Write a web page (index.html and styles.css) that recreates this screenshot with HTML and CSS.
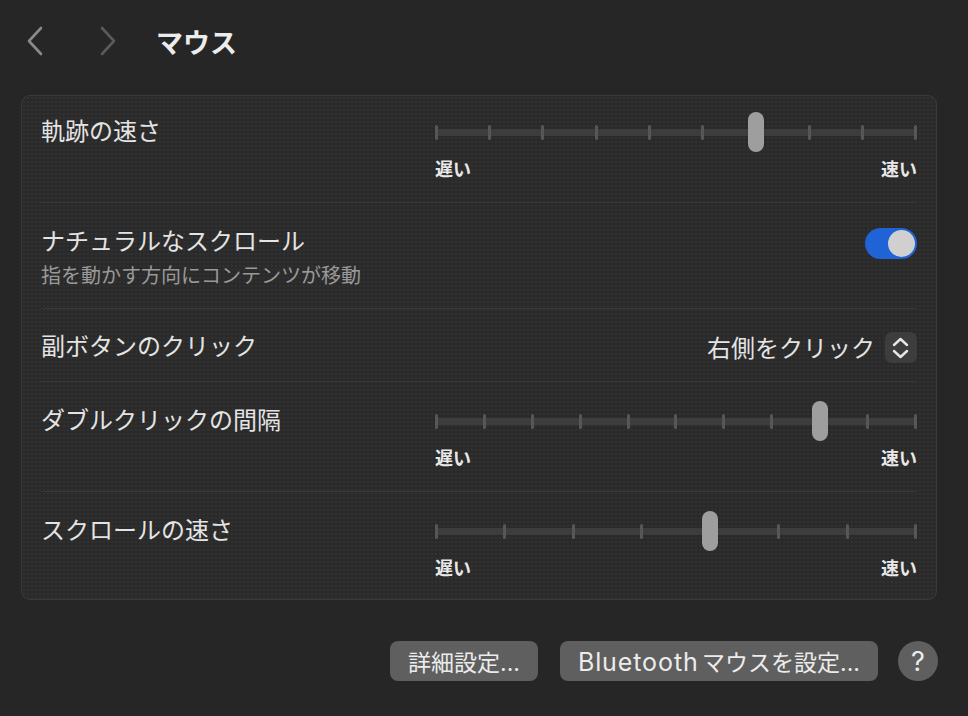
FILE: index.html
```html
<!DOCTYPE html>
<html lang="ja">
<head>
    <meta charset="UTF-8">
    <meta name="viewport" content="width=device-width, initial-scale=1.0">
    <title>マウス</title>
    <link rel="stylesheet" href="styles.css">
</head>
<body>
    <div class="header">
        <svg class="nav-btn back" viewBox="0 0 18 30"><polyline points="15,2 3,15 15,28"/></svg>
        <svg class="nav-btn forward" viewBox="0 0 18 30"><polyline points="3,2 15,15 3,28"/></svg>
        <h1>マウス</h1>
    </div>

    <div class="panel">
        <div class="row row-slider">
            <div class="row-title">軌跡の速さ</div>
            <div class="slider">
                <div class="slider-rail">
                    <div class="slider-ticks">
                        <span></span><span></span><span></span><span></span><span></span>
                        <span></span><span></span><span></span><span></span><span></span>
                    </div>
                    <div class="slider-thumb" style="--pos: 0.6667"></div>
                </div>
                <div class="slider-labels"><span>遅い</span><span>速い</span></div>
            </div>
        </div>

        <div class="row row-toggle">
            <div>
                <div class="row-title">ナチュラルなスクロール</div>
                <div class="row-subtitle">指を動かす方向にコンテンツが移動</div>
            </div>
            <div class="toggle on"><span class="knob"></span></div>
        </div>

        <div class="row row-select">
            <div class="row-title">副ボタンのクリック</div>
            <div class="select">
                <span>右側をクリック</span>
                <svg class="stepper" viewBox="0 0 32 31">
                    <polyline points="9,13 15.5,7 22,13"/>
                    <polyline points="9,19 15.5,25 22,19"/>
                </svg>
            </div>
        </div>

        <div class="row row-slider">
            <div class="row-title">ダブルクリックの間隔</div>
            <div class="slider">
                <div class="slider-rail">
                    <div class="slider-ticks">
                        <span></span><span></span><span></span><span></span><span></span><span></span>
                        <span></span><span></span><span></span><span></span><span></span>
                    </div>
                    <div class="slider-thumb" style="--pos: 0.8"></div>
                </div>
                <div class="slider-labels"><span>遅い</span><span>速い</span></div>
            </div>
        </div>

        <div class="row row-slider">
            <div class="row-title">スクロールの速さ</div>
            <div class="slider">
                <div class="slider-rail">
                    <div class="slider-ticks">
                        <span></span><span></span><span></span><span></span>
                        <span></span><span></span><span></span><span></span>
                    </div>
                    <div class="slider-thumb" style="--pos: 0.5714"></div>
                </div>
                <div class="slider-labels"><span>遅い</span><span>速い</span></div>
            </div>
        </div>
    </div>

    <div class="footer">
        <button class="btn">詳細設定...</button>
        <button class="btn"><span class="latin">Bluetooth</span> マウスを設定...</button>
        <button class="btn-help">?</button>
    </div>
</body>
</html>
```

FILE: styles.css
```css
body {
    margin: 0;
    background: #262626;
    font-family: "Inter", "Noto Sans CJK JP", sans-serif;
    color: #e6e6e6;
}

/* header */
.header {
    height: 82px;
    display: flex;
    align-items: center;
    padding-left: 26px;
}

.nav-btn {
    width: 18px;
    height: 30px;
    fill: none;
    stroke-width: 2.6;
    stroke-linecap: round;
    stroke-linejoin: round;
}

.nav-btn.back {
    stroke: #8a8a8a;
    margin-right: 55px;
}

.nav-btn.forward {
    stroke: #5a5a5a;
    margin-right: 39px;
}

.header h1 {
    margin: 0;
    font-family: "Noto Sans CJK JP", sans-serif;
    font-size: 27px;
    font-weight: 700;
    line-height: 1;
    color: #ececec;
}

/* settings panel */
.panel {
    margin: 13px 31px 0 21px;
    padding: 0 19px;
    border: 1px solid #3a3a3a;
    border-radius: 9px;
    background-color: #2a2a2a;
    background-image: radial-gradient(circle, rgba(255, 255, 255, 0.04) 0.7px, transparent 1px);
    background-size: 4px 4px;
}

.row {
    display: flex;
    justify-content: space-between;
    border-bottom: 1px solid #383838;
}

.row:last-child {
    border-bottom: none;
}

.row-title {
    font-family: "Noto Sans CJK JP", sans-serif;
    font-size: 24px;
    line-height: 36px;
    color: #e4e4e4;
}

.row-subtitle {
    font-family: "Noto Sans CJK JP", sans-serif;
    font-size: 20px;
    line-height: 28px;
    margin-top: 3px;
    color: #999;
}

.row-slider {
    align-items: flex-start;
    padding: 19px 0 22px;
}

.row-slider:first-child {
    padding-top: 16px;
}

.row-slider:last-child {
    padding-bottom: 20px;
}

.row-toggle {
    align-items: flex-start;
    padding: 19px 0;
}

.row-select {
    align-items: flex-start;
    box-sizing: border-box;
    height: 73px;
    padding-top: 18px;
}

/* slider */
.slider {
    width: 482px;
}

.slider-rail {
    position: relative;
    height: 40px;
    display: flex;
    align-items: center;
}

.slider-ticks {
    flex: 1;
    height: 15px;
    display: flex;
    justify-content: space-between;
    align-items: stretch;
    background: linear-gradient(transparent 4px, #3d3d3d 4px, #3d3d3d 11px, transparent 11px);
}

.slider-ticks span {
    width: 3px;
    border-radius: 1.5px;
    background: #575757;
}

.slider-thumb {
    position: absolute;
    top: 0;
    left: calc(1.5px + (100% - 3px) * var(--pos));
    transform: translateX(-50%);
    width: 16px;
    height: 40px;
    border-radius: 8px;
    background: #9e9e9e;
}

.slider-labels {
    display: flex;
    justify-content: space-between;
    margin-top: 4px;
    font-family: "Noto Sans CJK JP", sans-serif;
    font-size: 18px;
    font-weight: 700;
    line-height: 24px;
    color: #e8e8e8;
}

/* toggle */
.toggle {
    width: 52px;
    height: 31px;
    margin-top: 6px;
    box-sizing: border-box;
    padding: 2px;
    border-radius: 16px;
    background: #3a3a3a;
    display: flex;
}

.toggle.on {
    background: #1f63d6;
    justify-content: flex-end;
}

.toggle .knob {
    width: 27px;
    height: 27px;
    border-radius: 50%;
    background: #d0d0d0;
}

/* popup select */
.select {
    display: flex;
    align-items: center;
    gap: 10px;
    margin-top: 4px;
    font-family: "Noto Sans CJK JP", sans-serif;
    font-size: 24px;
    line-height: 32px;
    color: #e4e4e4;
}

.stepper {
    width: 32px;
    height: 31px;
    border-radius: 7px;
    background: #3d3d3d;
    fill: none;
    stroke: #e6e6e6;
    stroke-width: 2.4;
    stroke-linecap: round;
    stroke-linejoin: round;
}

/* footer buttons */
.footer {
    display: flex;
    justify-content: flex-end;
    align-items: center;
    margin-top: 41px;
    padding-right: 30px;
}

.btn {
    height: 40px;
    padding: 0 18px;
    margin-right: 22px;
    border: none;
    border-radius: 8px;
    background: #5f5f5f;
    font-family: "Inter", "Noto Sans CJK JP", sans-serif;
    font-size: 23px;
    word-spacing: -3px;
    color: #ececec;
}

.btn + .btn {
    margin-right: 20px;
}

.btn .latin {
    font-size: 25px;
    letter-spacing: 0.9px;
}

.btn-help {
    width: 40px;
    height: 40px;
    padding: 0;
    border: none;
    border-radius: 50%;
    background: #5f5f5f;
    font-family: "Inter", sans-serif;
    font-size: 27px;
    color: #ececec;
}
```
